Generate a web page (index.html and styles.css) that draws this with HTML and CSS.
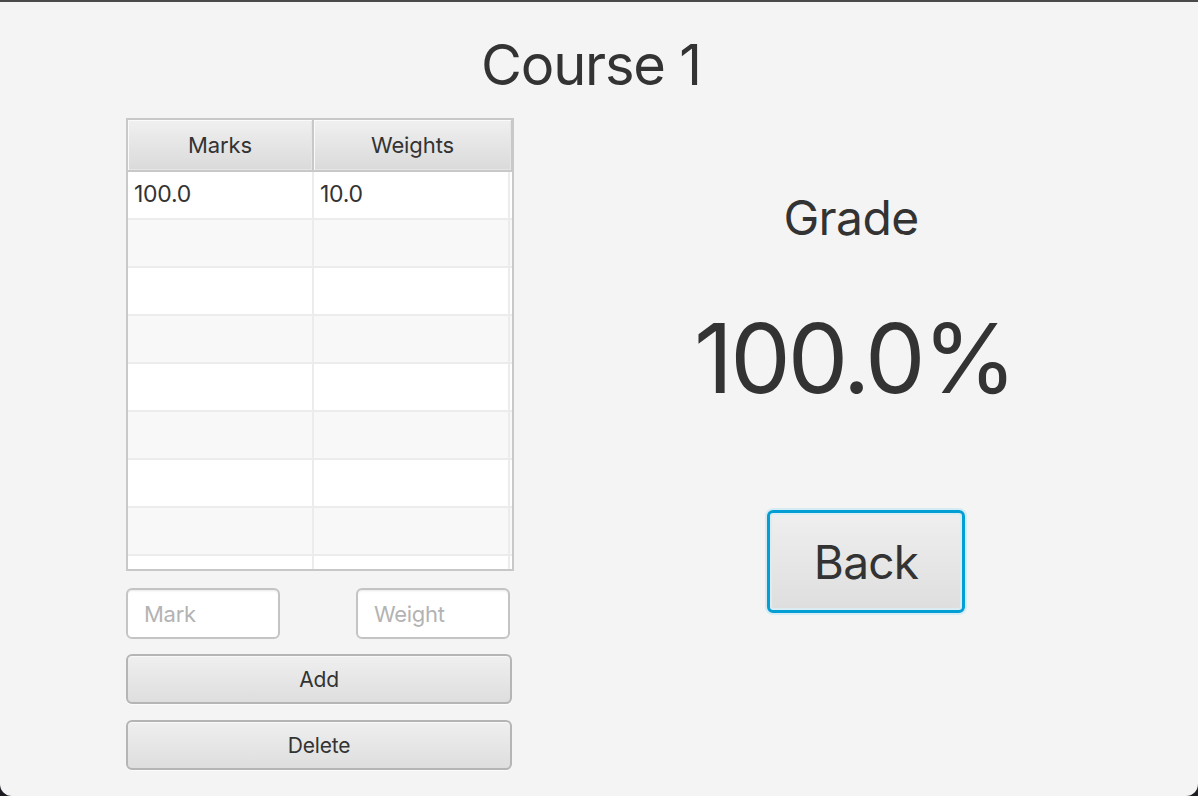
FILE: index.html
```html
<!DOCTYPE html>
<html>
<head>
<meta charset="utf-8">
<link rel="stylesheet" href="styles.css">
</head>
<body>
<div class="window">
  <h1 class="title">Course 1</h1>
  <div class="main">
    <div class="left">
      <div class="table">
        <div class="thead">
          <div class="th">Marks</div>
          <div class="th">Weights</div>
        </div>
        <div class="tbody">
          <div class="tr"><div class="td">100.0</div><div class="td">10.0</div></div>
          <div class="tr odd"><div class="td"></div><div class="td"></div></div>
          <div class="tr"><div class="td"></div><div class="td"></div></div>
          <div class="tr odd"><div class="td"></div><div class="td"></div></div>
          <div class="tr"><div class="td"></div><div class="td"></div></div>
          <div class="tr odd"><div class="td"></div><div class="td"></div></div>
          <div class="tr"><div class="td"></div><div class="td"></div></div>
          <div class="tr odd"><div class="td"></div><div class="td"></div></div>
          <div class="tr"><div class="td"></div><div class="td"></div></div>
        </div>
      </div>
      <div class="fields">
        <input class="field" type="text" placeholder="Mark">
        <input class="field" type="text" placeholder="Weight">
      </div>
      <button class="btn wide">Add</button>
      <button class="btn wide">Delete</button>
    </div>
    <div class="right">
      <div class="grade-label">Grade</div>
      <div class="grade-value">100.0%</div>
      <button class="btn back">Back</button>
    </div>
  </div>
</div>
</body>
</html>
```

FILE: styles.css
```css
html, body {
  margin: 0;
  padding: 0;
  background: #1c1c22;
}
body {
  font-family: "Inter", "Liberation Sans", sans-serif;
  color: #333333;
}
.window {
  width: 1198px;
  height: 796px;
  box-sizing: border-box;
  background: #f4f4f4;
  border-top: 2px solid #4a4a4a;
  border-radius: 0 0 12px 12px;
  overflow: hidden;
}
.title {
  margin: 0;
  padding-top: 29px;
  padding-right: 16px;
  height: 86px;
  box-sizing: border-box;
  text-align: center;
  font-size: 56px;
  font-weight: 400;
  line-height: 68px;
  letter-spacing: -1.2px;
  color: #333;
}
.main {
  display: flex;
  padding-left: 126px;
  margin-top: 30px;
}
.left {
  width: 388px;
  display: flex;
  flex-direction: column;
}
.table {
  height: 453px;
  box-sizing: border-box;
  border: 2px solid #c8c8c8;
  background: #ffffff;
  overflow: hidden;
}
.thead {
  display: grid;
  grid-template-columns: 186px 198px;
  height: 52px;
  box-sizing: border-box;
  border-bottom: 2px solid #c8c8c8;
}
.th {
  display: flex;
  align-items: center;
  justify-content: center;
  background: linear-gradient(#f0f0f0, #dadada);
  box-shadow: inset 1px 1px 0 #fafafa, inset -1px -1px 0 #e6e6e6;
  border-right: 2px solid #c8c8c8;
  font-size: 22px;
  letter-spacing: -0.1px;
  color: #333;
}
.th:last-child {
  border-right: 1px solid #c8c8c8;
}
.tr {
  display: grid;
  grid-template-columns: 186px 196px;
  height: 48px;
  box-sizing: border-box;
  border-bottom: 2px solid #ececec;
  background: #ffffff;
}
.tr.odd {
  background: #f8f8f8;
}
.td {
  border-right: 2px solid #ececec;
  font-size: 23px;
  line-height: 44px;
  padding-left: 6px;
  letter-spacing: -0.3px;
  color: #333;
}
.fields {
  display: flex;
  justify-content: space-between;
  padding-right: 4px;
  margin-top: 17px;
}
.field {
  width: 154px;
  height: 51px;
  box-sizing: border-box;
  border: 2px solid #c4c4c4;
  border-radius: 6px;
  background: #ffffff;
  box-shadow: inset 0 2px 2px -1px #e8e8e8;
  font-family: "Inter", "Liberation Sans", sans-serif;
  font-size: 22px;
  padding: 0 16px;
  color: #333;
  outline: none;
}
.field::placeholder {
  color: #b3b3b3;
  letter-spacing: -0.3px;
}
.btn {
  font-family: "Inter", "Liberation Sans", sans-serif;
  color: #333;
  border: 2px solid #b5b5b5;
  border-radius: 6px;
  background: linear-gradient(#efefef, #dedede);
  box-shadow: inset 0 1px 0 #f8f8f8, 0 1px 0 #fbfbfb;
  padding: 0;
  cursor: pointer;
}
.wide {
  width: 386px;
  height: 50px;
  font-size: 21px;
  letter-spacing: -0.2px;
  margin-top: 15px;
}
.wide + .wide {
  margin-top: 16px;
}
.right {
  flex: 1;
  display: flex;
  flex-direction: column;
  align-items: center;
}
.grade-label {
  margin-top: 70px;
  font-size: 48px;
  line-height: 60px;
  letter-spacing: -0.6px;
  margin-left: -10px;
}
.grade-value {
  margin-top: 50px;
  font-size: 96px;
  line-height: 120px;
  letter-spacing: -3px;
  margin-left: -4px;
}
.back {
  margin-top: 92px;
  margin-left: 20px;
  width: 198px;
  height: 103px;
  font-size: 46px;
  letter-spacing: -0.8px;
  border: 3px solid #039ed3;
  box-shadow: 0 0 0 2px #d6ecf5, inset 0 0 0 2px #dcecf3;
}
```
